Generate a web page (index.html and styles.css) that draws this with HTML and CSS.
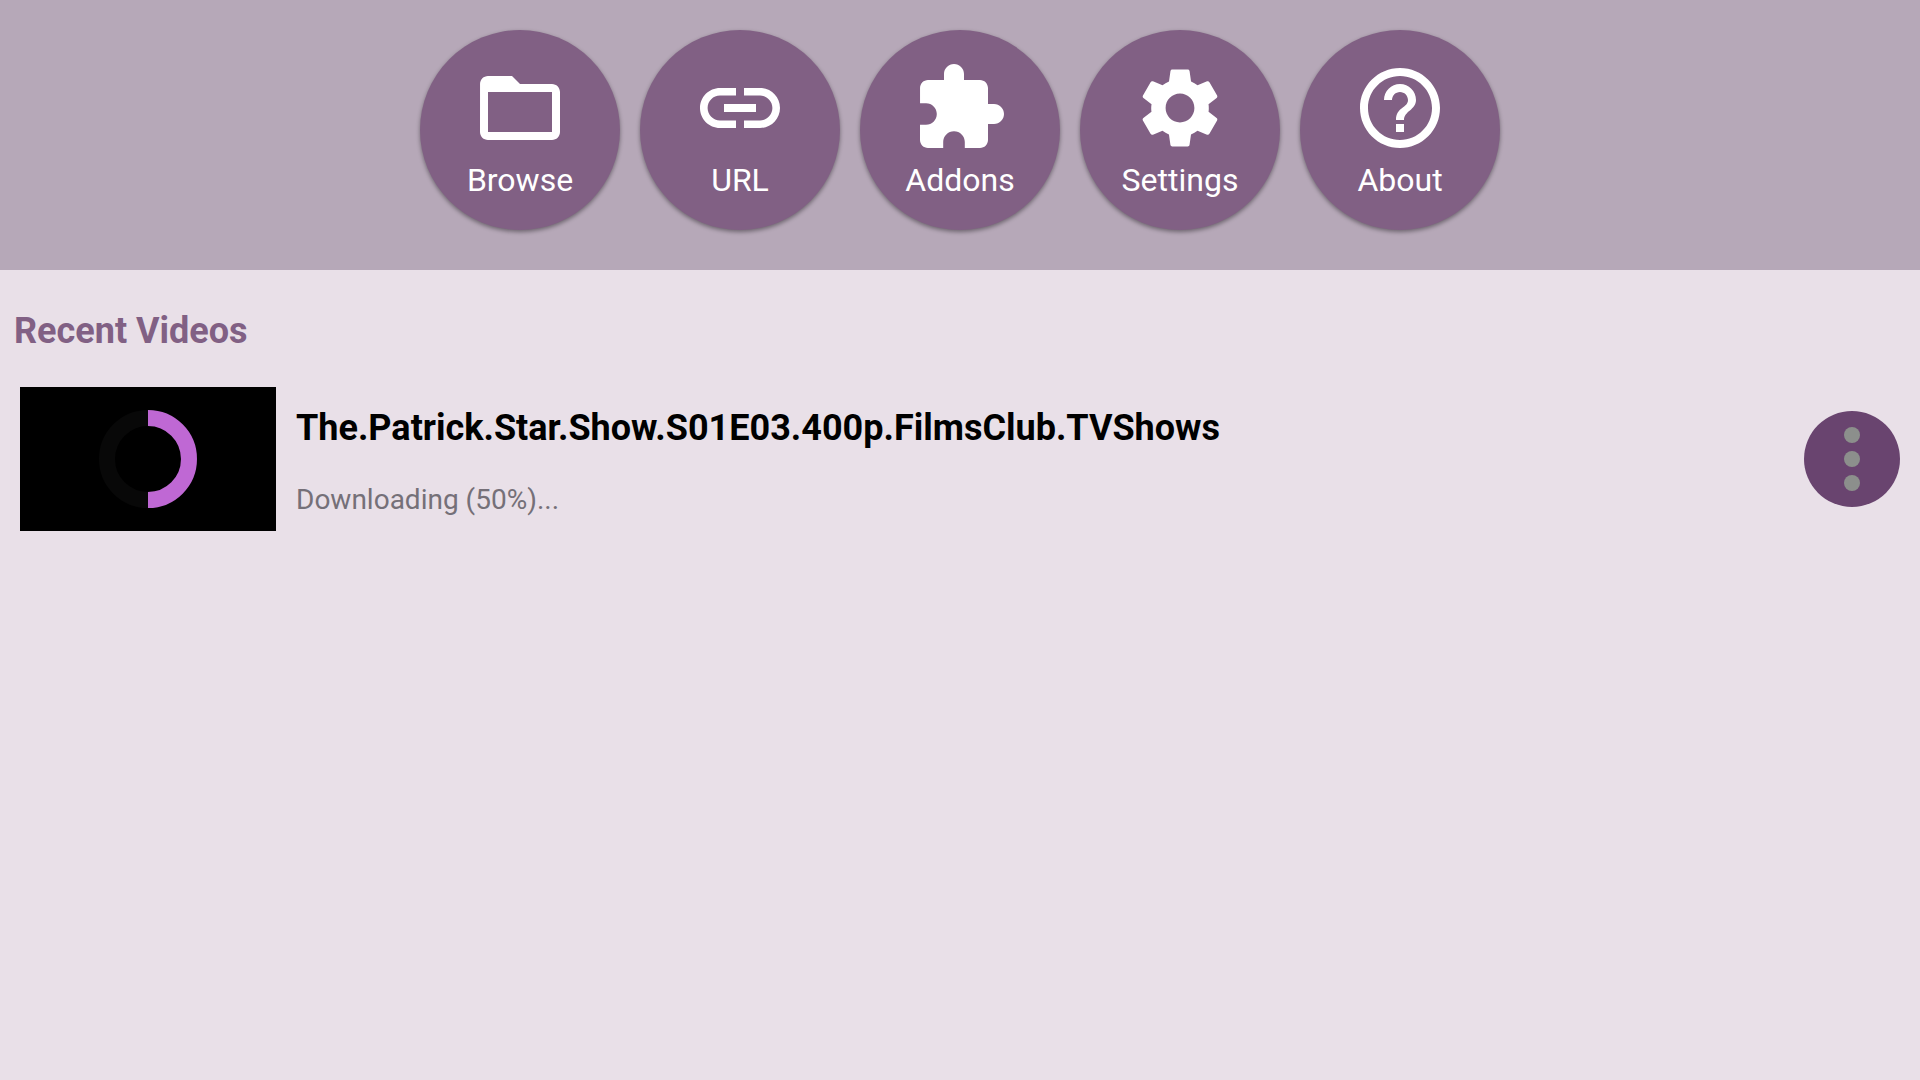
FILE: index.html
```html
<!DOCTYPE html>
<html lang="en">
<head>
    <meta charset="UTF-8">
    <meta name="viewport" content="width=device-width, initial-scale=1.0">
    <title>Videos</title>
    <link rel="stylesheet" href="styles.css">
</head>

<body>
    <nav class="toolbar">
        <button class="round" type="button">
            <svg viewBox="0 0 24 24" aria-hidden="true"><path d="M20 6h-8l-2-2H4c-1.1 0-1.99.9-1.99 2L2 18c0 1.1.9 2 2 2h16c1.1 0 2-.9 2-2V8c0-1.1-.9-2-2-2zm0 12H4V8h16v10z"/></svg>
            Browse
        </button>
        <button class="round" type="button">
            <svg viewBox="0 0 24 24" aria-hidden="true"><path d="M3.9 12c0-1.71 1.39-3.1 3.1-3.1h4V7H7c-2.76 0-5 2.24-5 5s2.24 5 5 5h4v-1.9H7c-1.71 0-3.1-1.39-3.1-3.1zM8 13h8v-2H8v2zm9-6h-4v1.9h4c1.71 0 3.1 1.39 3.1 3.1s-1.39 3.1-3.1 3.1h-4V17h4c2.76 0 5-2.24 5-5s-2.24-5-5-5z"/></svg>
            URL
        </button>
        <button class="round" type="button">
            <svg viewBox="0 0 24 24" aria-hidden="true"><path d="M20.5 11H19V7c0-1.1-.9-2-2-2h-4V3.5C13 2.12 11.88 1 10.5 1S8 2.12 8 3.5V5H4c-1.1 0-1.99.9-1.99 2v3.8H3.5c1.49 0 2.7 1.21 2.7 2.7s-1.21 2.7-2.7 2.7H2V20c0 1.1.9 2 2 2h3.8v-1.5c0-1.49 1.21-2.7 2.7-2.7 1.49 0 2.7 1.21 2.7 2.7V22H17c1.1 0 2-.9 2-2v-4h1.500c1.380 0 2.500-1.120 2.500-2.500S21.880 11 20.500 11z"/></svg>
            Addons
        </button>
        <button class="round" type="button">
            <svg viewBox="0 0 24 24" aria-hidden="true"><path d="M19.14 12.94c.04-.3.06-.61.06-.94 0-.32-.02-.64-.07-.94l2.03-1.58c.18-.14.23-.41.12-.61l-1.92-3.32c-.12-.22-.37-.29-.59-.22l-2.39.96c-.5-.38-1.03-.7-1.62-.94l-.36-2.54c-.04-.24-.24-.41-.48-.41h-3.84c-.24 0-.43.17-.47.41l-.36 2.54c-.59.24-1.13.57-1.62.94l-2.39-.96c-.22-.08-.47 0-.59.22L2.74 8.87c-.12.21-.08.47.12.61l2.03 1.58c-.05.3-.09.63-.09.94s.02.64.07.94l-2.03 1.58c-.18.14-.23.41-.12.61l1.92 3.32c.12.22.37.29.59.22l2.39-.96c.5.38 1.03.7 1.62.94l.36 2.54c.05.24.24.41.48.41h3.84c.24 0 .44-.17.47-.41l.36-2.54c.59-.24 1.13-.56 1.62-.94l2.39.96c.22.08.47 0 .59-.22l1.92-3.32c.12-.22.07-.47-.12-.61l-2.01-1.58zM12 15.6c-1.98 0-3.6-1.62-3.6-3.6s1.62-3.6 3.6-3.6 3.6 1.62 3.6 3.6-1.62 3.6-3.6 3.6z"/></svg>
            Settings
        </button>
        <button class="round" type="button">
            <svg viewBox="0 0 24 24" aria-hidden="true"><path d="M11 18h2v-2h-2v2zm1-16C6.48 2 2 6.48 2 12s4.48 10 10 10 10-4.48 10-10S17.52 2 12 2zm0 18c-4.41 0-8-3.59-8-8s3.59-8 8-8 8 3.59 8 8-3.59 8-8 8zm0-14c-2.21 0-4 1.79-4 4h2c0-1.1.9-2 2-2s2 .9 2 2c0 2-3 1.75-3 5h2c0-2.25 3-2.5 3-5 0-2.21-1.79-4-4-4z"/></svg>
            About
        </button>
    </nav>

    <main>
        <h1>Recent Videos</h1>
        <ul class="videos">
            <li class="video">
                <div class="thumb">
                    <svg viewBox="0 0 98 98" aria-hidden="true">
                        <circle class="track" cx="49" cy="49" r="41"/>
                        <path class="progress" d="M49 8a41 41 0 0 1 0 82"/>
                    </svg>
                </div>
                <div class="info">
                    <h2>The.Patrick.Star.Show.S01E03.400p.FilmsClub.TVShows</h2>
                    <p>Downloading (50%)...</p>
                </div>
                <button class="more" type="button" aria-label="More options">
                    <svg viewBox="0 0 96 96" aria-hidden="true"><circle cx="48" cy="24" r="8"/><circle cx="48" cy="48" r="8"/><circle cx="48" cy="72" r="8"/></svg>
                </button>
            </li>
        </ul>
    </main>
</body>
</html>
```
FILE: styles.css
```css
body {
    margin: 0;
    background-color: #E9E0E8;
    font-family: Roboto, Arial, sans-serif;
}
button {
    border: 0;
    padding: 0;
    border-radius: 50%;
    font-family: inherit;
    cursor: pointer;
}
.toolbar {
    display: flex;
    justify-content: center;
    gap: 20px;
    padding: 30px 20px 40px;
    background-color: #B6A8B8;
}
.round {
    display: flex;
    flex-direction: column;
    align-items: center;
    justify-content: center;
    gap: 4px;
    width: 200px;
    height: 200px;
    background-color: #816084;
    color: #FFFFFF;
    font-size: 32px;
    line-height: 40px;
    box-shadow: 0 2px 4px rgba(0, 0, 0, 0.4);
}
.round svg {
    width: 96px;
    height: 96px;
    fill: #FFFFFF;
}
h1 {
    margin: 0;
    padding: 41px 14px 36px;
    font-size: 36px;
    line-height: 40px;
    color: #816084;
}
.videos {
    margin: 0;
    padding: 0 20px;
    list-style: none;
}
.video {
    display: flex;
    align-items: center;
    gap: 20px;
}
.thumb {
    display: flex;
    align-items: center;
    justify-content: center;
    width: 256px;
    height: 144px;
    background-color: #000000;
}
.thumb svg {
    width: 98px;
    height: 98px;
    fill: none;
    stroke-width: 16px;
}
.track {
    stroke: #080808;
}
.progress {
    stroke: #BF68D4;
}
.info {
    flex: 1;
    padding-top: 6px;
}
.info h2 {
    margin: 0 0 36px;
    font-size: 36px;
    line-height: 40px;
    color: #000000;
}
.info p {
    margin: 0;
    font-size: 28px;
    line-height: 32px;
    color: #757078;
}
.more {
    width: 96px;
    height: 96px;
    background-color: #69446F;
}
.more svg {
    display: block;
    fill: #8C8F8C;
}
```
